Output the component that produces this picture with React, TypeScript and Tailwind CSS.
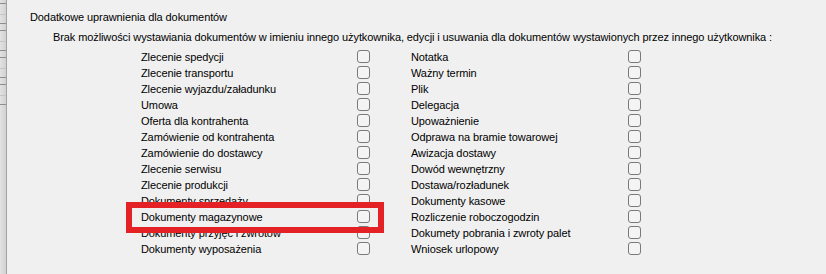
import React from "react";

const left = [
  "Zlecenie spedycji",
  "Zlecenie transportu",
  "Zlecenie wyjazdu/załadunku",
  "Umowa",
  "Oferta dla kontrahenta",
  "Zamówienie od kontrahenta",
  "Zamówienie do dostawcy",
  "Zlecenie serwisu",
  "Zlecenie produkcji",
  "Dokumenty sprzedaży",
  "Dokumenty magazynowe",
  "Dokumenty przyjęć i zwrotów",
  "Dokumenty wyposażenia",
];

const right = [
  "Notatka",
  "Ważny termin",
  "Plik",
  "Delegacja",
  "Upoważnienie",
  "Odprawa na bramie towarowej",
  "Awizacja dostawy",
  "Dowód wewnętrzny",
  "Dostawa/rozładunek",
  "Dokumenty kasowe",
  "Rozliczenie roboczogodzin",
  "Dokumety pobrania i zwroty palet",
  "Wniosek urlopowy",
];

function Box() {
  return <div className="w-[13px] h-[13px] mt-[2px] rounded-[3px] border border-[#7a7a7a] bg-[#f4f4f4]" />;
}

function Strip() {
  const D = "border-t border-[#8e8e8e]";
  const L = "border-t border-[#c6c6c6]";
  return (
    <div className="w-[7px] h-full shrink-0 bg-gradient-to-r from-[#e2e2e2] to-[#d2d2d2] border-r border-[#a3a3a3] flex flex-col pt-[3px]">
      <div className={`h-[11px] ${D}`} />
      <div className={`h-[9px] ${L}`} />
      <div className={`h-[7px] ${D}`} />
      <div className={`h-[11px] ${D}`} />
      <div className={`h-[9px] ${L}`} />
      <div className={`h-[7px] ${D}`} />
      <div className={`h-[11px] ${D}`} />
      <div className={`h-[9px] ${L}`} />
      <div className={`h-[7px] ${D}`} />
      <div className={`h-[11px] ${D}`} />
      <div className={`h-[9px] ${L}`} />
      <div className={`h-[1px] ${D}`} />
    </div>
  );
}

export default function App() {
  return (
    <div
      className="relative w-[826px] h-[274px] bg-[#f0f0f0] flex text-[11px] leading-4 tracking-[-0.1px] text-black overflow-hidden"
      style={{ fontFamily: '"Liberation Sans", Arial, sans-serif' }}
    >
      <Strip />
      <div className="flex flex-col pt-[9px]">
        <div className="pl-[23px] h-4">Dodatkowe uprawnienia dla dokumentów</div>
        <div className="pl-[46px] h-4 mt-[4px] whitespace-nowrap">
          Brak możliwości wystawiania dokumentów w imieniu innego użytkownika, edycji i usuwania dla dokumentów wystawionych przez innego użytkownika :
        </div>
        <div className="flex pl-[134px] mt-[3px]">
          <div className="flex flex-col w-[270px]">
            {left.map((t) => (
              <div key={t} className="flex h-4 items-start">
                <div className="w-[216px] whitespace-nowrap pt-[1px]">{t}</div>
                <Box />
              </div>
            ))}
          </div>
          <div className="flex flex-col">
            {right.map((t) => (
              <div key={t} className="flex h-4 items-start">
                <div className="w-[217px] whitespace-nowrap pt-[1px]">{t}</div>
                <Box />
              </div>
            ))}
          </div>
        </div>
      </div>
      <div className="absolute left-[126px] top-[202px] w-[258px] h-[31px] border-[6px] border-[#e42226]" />
    </div>
  );
}
